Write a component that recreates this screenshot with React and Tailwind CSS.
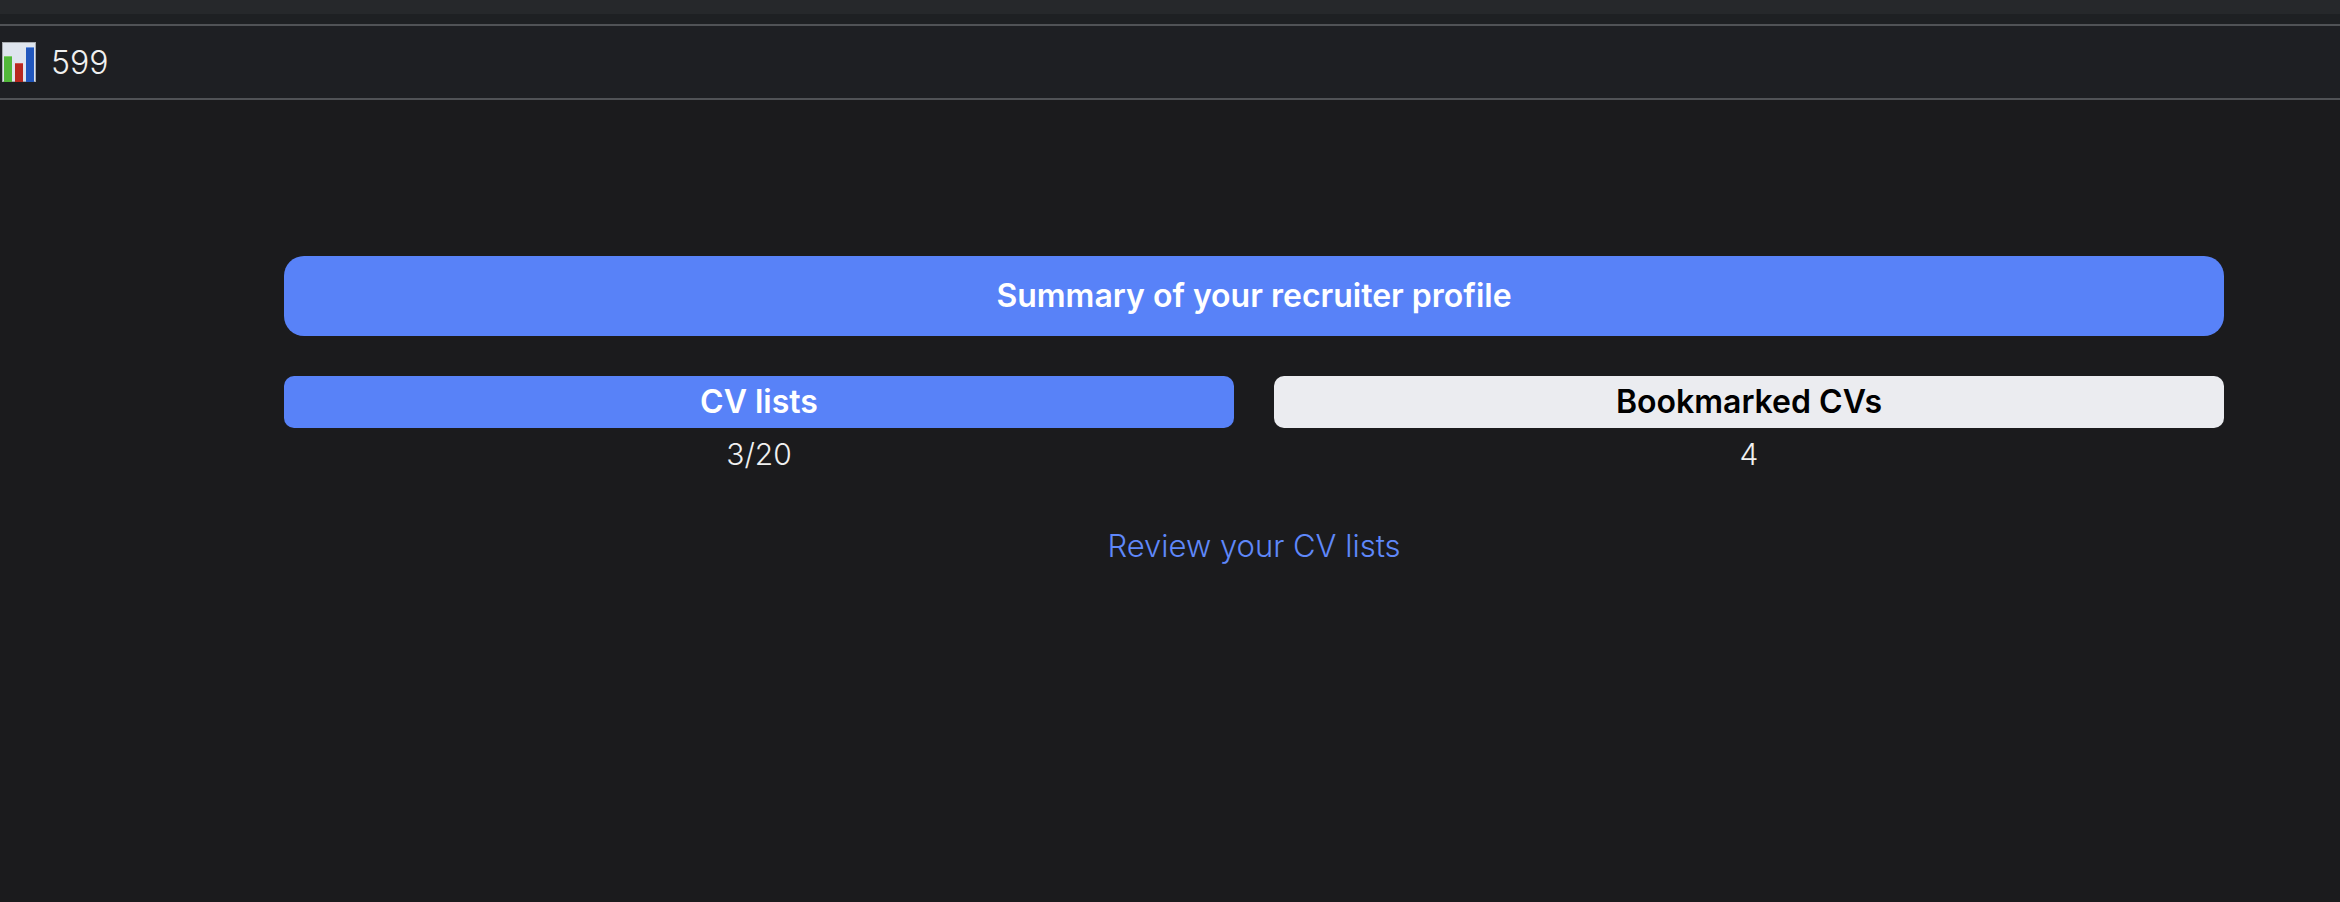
const StatsIcon = () => (
  <svg width="34" height="40" viewBox="0 0 34 40" className="shrink-0">
    <rect x="0" y="0" width="34" height="40" fill="#dfe5ee" />
    <rect x="0.5" y="0.5" width="33" height="39" fill="none" stroke="#a9acb0" />
    <rect x="2" y="14" width="8" height="26" fill="#52b83a" />
    <rect x="2" y="14" width="8" height="1" fill="#7fcf6a" />
    <rect x="13" y="21" width="8" height="19" fill="#b8281f" />
    <rect x="13" y="21" width="8" height="1" fill="#d0574f" />
    <rect x="24" y="5" width="8" height="35" fill="#2257bd" />
    <rect x="24" y="5" width="8" height="1" fill="#6b93df" />
  </svg>
);

const StatBox = ({ label, value, active }) => (
  <div className="flex-1 flex flex-col items-center">
    <div
      className={`w-full h-[52px] rounded-[10px] flex items-center justify-center text-[32px] font-semibold ${
        active ? 'bg-[#5882f8] text-white' : 'bg-[#ebecf0] text-black'
      }`}
    >
      {label}
    </div>
    <p className="mt-[8px] text-[30px] leading-[36px] font-light text-[#f0f0f0]">{value}</p>
  </div>
);

export default function App() {
  return (
    <div className="min-h-[902px] bg-[#1b1b1d] font-['Inter',sans-serif] overflow-hidden">
      <div className="h-[14px] bg-[#26282b]" />
      <div className="h-[10px] bg-[#1e2023]" />
      <div className="h-[76px] flex items-center gap-[15px] pl-[2px] bg-[#1e1f23] border-y-2 border-[#505256]">
        <StatsIcon />
        <span className="pt-[2px] text-[32px] font-light text-[#f0f0f0]">599</span>
      </div>

      <div className="mx-[116px] pl-[168px] pt-[156px]">
        <div className="h-[80px] rounded-[20px] bg-[#5882f8] flex items-center justify-center text-[32px] font-semibold text-white">
          Summary of your recruiter profile
        </div>
        <div className="flex gap-[40px] mt-[40px]">
          <StatBox label="CV lists" value="3/20" active />
          <StatBox label="Bookmarked CVs" value="4" />
        </div>
        <div className="mt-[51px] text-center">
          <a href="#" className="text-[31px] font-light text-[#5f88fa]">Review your CV lists</a>
        </div>
      </div>
    </div>
  );
}
